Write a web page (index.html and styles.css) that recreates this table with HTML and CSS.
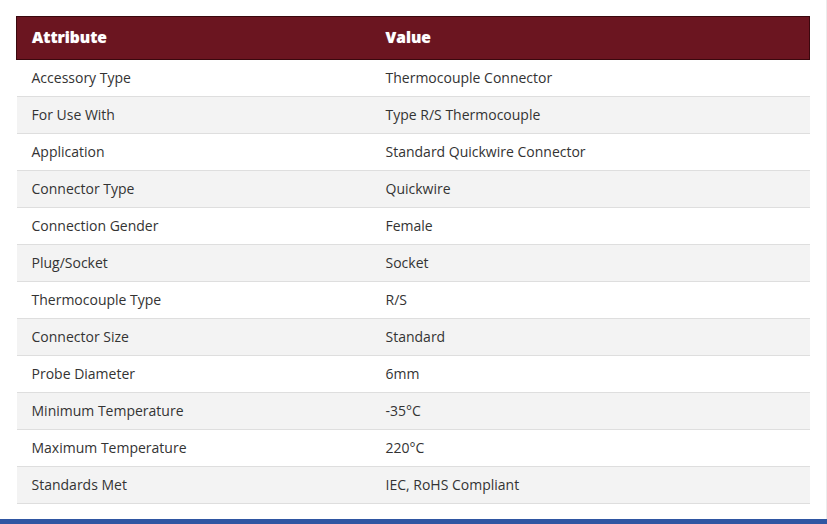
FILE: index.html
```html
<!DOCTYPE html>
<html>
<head>
<meta charset="utf-8">
<link rel="stylesheet" href="styles.css">
</head>
<body>
<div class="page">
  <table class="spec">
    <thead>
      <tr><th class="c1">Attribute</th><th>Value</th></tr>
    </thead>
    <tbody>
      <tr><td>Accessory Type</td><td>Thermocouple Connector</td></tr>
      <tr><td>For Use With</td><td>Type R/S Thermocouple</td></tr>
      <tr><td>Application</td><td>Standard Quickwire Connector</td></tr>
      <tr><td>Connector Type</td><td>Quickwire</td></tr>
      <tr><td>Connection Gender</td><td>Female</td></tr>
      <tr><td>Plug/Socket</td><td>Socket</td></tr>
      <tr><td>Thermocouple Type</td><td>R/S</td></tr>
      <tr><td>Connector Size</td><td>Standard</td></tr>
      <tr><td>Probe Diameter</td><td>6mm</td></tr>
      <tr><td>Minimum Temperature</td><td>-35°C</td></tr>
      <tr><td>Maximum Temperature</td><td>220°C</td></tr>
      <tr><td>Standards Met</td><td>IEC, RoHS Compliant</td></tr>
    </tbody>
  </table>
</div>
<div class="footer-bar"></div>
</body>
</html>
```
FILE: styles.css
```css
html, body {
  margin: 0;
  padding: 0;
  background: #ffffff;
  font-family: "Open Sans", "Liberation Sans", sans-serif;
  color: #333333;
}
.page {
  height: 519px;
  box-sizing: border-box;
  padding: 16px 17px 0 16px;
  border-right: 1px solid #ececec;
}
.spec {
  width: 794px;
  border-collapse: collapse;
  font-size: 14px;
}
.spec th {
  background: #6b1520;
  color: #ffffff;
  font-weight: 800;
  font-size: 15.5px;
  text-align: left;
  height: 43px;
  padding: 0 15px 2px 15px;
  box-sizing: border-box;
  border-top: 1px solid #3a080e;
  border-bottom: 1px solid #3a080e;
  text-shadow: 0 0 1px rgba(255,255,255,0.4);
}
.spec th:first-child { border-left: 1px solid #3a080e; }
.spec th:last-child { border-right: 1px solid #3a080e; }
.spec th.c1 { width: 354px; }
.spec td {
  height: 37px;
  padding: 0 15px 1px 15px;
  box-sizing: border-box;
  border-bottom: 1px solid #dedede;
  vertical-align: middle;
}
.spec tbody tr:nth-child(even) td { background: #f3f3f3; }
.footer-bar {
  height: 5px;
  background: #2f56a2;
}
```
